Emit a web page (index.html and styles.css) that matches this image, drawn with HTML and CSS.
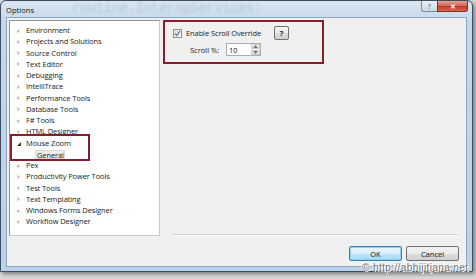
FILE: index.html
```html
<!DOCTYPE html>
<html>
<head>
<meta charset="utf-8">
<link rel="stylesheet" href="styles.css">
</head>
<body>
<div class="window">
  <div class="titlebar">
    <span class="glass-text">routine.InteropServices:</span>
    <span class="title">Options</span>
    <div class="caption">
      <div class="cap-help">?</div>
      <div class="cap-close">✕</div>
    </div>
  </div>
  <div class="client">
    <div class="main">
      <div class="tree">
        <ul class="tree-list">
          <li><span class="arr"></span>Environment</li>
          <li><span class="arr"></span>Projects and Solutions</li>
          <li><span class="arr"></span>Source Control</li>
          <li><span class="arr"></span>Text Editor</li>
          <li><span class="arr"></span>Debugging</li>
          <li><span class="arr"></span>IntelliTrace</li>
          <li><span class="arr"></span>Performance Tools</li>
          <li><span class="arr"></span>Database Tools</li>
          <li><span class="arr"></span>F# Tools</li>
          <li><span class="arr"></span>HTML Designer</li>
          <li><span class="arr open"></span>Mouse Zoom</li>
          <li class="child"><span class="sel">General</span></li>
          <li><span class="arr"></span>Pex</li>
          <li><span class="arr"></span>Productivity Power Tools</li>
          <li><span class="arr"></span>Test Tools</li>
          <li><span class="arr"></span>Text Templating</li>
          <li><span class="arr"></span>Windows Forms Designer</li>
          <li><span class="arr"></span>Workflow Designer</li>
        </ul>
        <div class="annot-tree"></div>
      </div>
      <div class="pane">
        <div class="settings">
          <div class="row1">
            <span class="check"><svg width="7" height="7" viewBox="0 0 7 7"><path d="M1 3.6 L2.8 5.6 L6 1" fill="none" stroke="#5a6d92" stroke-width="1.2"/></svg></span>
            <span class="label-enable">Enable Scroll Override</span>
            <span class="qbtn">?</span>
          </div>
          <div class="row2">
            <span class="label-scroll">Scroll %:</span>
            <span class="spin">
              <span class="spin-val">10</span>
              <span class="spin-btns">
                <span class="sb"><svg width="5" height="3" viewBox="0 0 5 3"><path d="M0 3 L2.5 0 L5 3Z" fill="#6d7a8c"/></svg></span>
                <span class="sb"><svg width="5" height="3" viewBox="0 0 5 3"><path d="M0 0 L2.5 3 L5 0Z" fill="#6d7a8c"/></svg></span>
              </span>
            </span>
          </div>
        </div>
        <div class="sep"></div>
      </div>
    </div>
    <div class="footer">
      <span class="btn btn-ok">OK</span>
      <span class="btn">Cancel</span>
    </div>
  </div>
</div>
<div class="watermark">© http://abhijitjana.net</div>
</body>
</html>
```
FILE: styles.css
```css
html, body {
  margin: 0;
  padding: 0;
}
body {
  width: 476px;
  height: 279px;
  background: #d9d9d9;
  position: relative;
  overflow: hidden;
  font-family: "Open Sans", "Noto Sans", sans-serif;
}
.window {
  box-sizing: border-box;
  width: 473px;
  height: 272px;
  border: 1px solid #3f4d5e;
  border-radius: 6px 6px 0 0;
  background: linear-gradient(to bottom, #dbe6f1 0px, #c4d8ec 20px, #b9d1ea 100%);
  padding: 0 5px 4px 5px;
  display: flex;
  flex-direction: column;
  box-shadow: 2px 2px 4px rgba(0,0,0,0.45);
}
.titlebar {
  height: 16px;
  position: relative;
  display: flex;
  align-items: center;
  flex-shrink: 0;
}
.glass-text {
  position: absolute;
  left: 66px;
  top: -1px;
  font-family: "Liberation Mono", monospace;
  font-size: 14px;
  letter-spacing: -0.5px;
  color: rgba(95, 115, 140, 0.24);
  filter: blur(1px);
  white-space: nowrap;
}
.title {
  position: relative;
  font-size: 7.6px;
  color: #111;
  margin-top: 2px;
}
.caption {
  margin-left: auto;
  margin-right: -1px;
  align-self: flex-start;
  display: flex;
  position: relative;
}
.cap-help, .cap-close {
  height: 11px;
  box-sizing: border-box;
  display: flex;
  align-items: center;
  justify-content: center;
  font-size: 7px;
  font-weight: bold;
}
.cap-help {
  width: 16px;
  border: 1px solid #7e8a99;
  border-top: none;
  border-right: none;
  border-radius: 0 0 0 3px;
  background: linear-gradient(to bottom, #e9eef4, #cfd8e2);
  color: #8b97a6;
}
.cap-close {
  width: 31px;
  border: 1px solid #7b3028;
  border-top: none;
  border-radius: 0 0 3px 0;
  background: linear-gradient(to bottom, #e6a394 0%, #d56a58 45%, #c43b2a 55%, #d6664d 100%);
  color: #fff;
  font-size: 7px;
}
.client {
  box-sizing: border-box;
  flex: 1;
  border: 1px solid #8fa5bd;
  background: #f0f0f0;
  display: flex;
  flex-direction: column;
}
.main {
  display: flex;
  padding: 2px 0 0 2px;
}
.tree {
  position: relative;
  box-sizing: border-box;
  width: 151px;
  height: 216px;
  background: #fff;
  border: 1px solid #8e939b;
  border-right-color: #c6c9ce;
  border-bottom-color: #c6c9ce;
}
.tree-list {
  list-style: none;
  margin: 0;
  padding: 4px 0 0 0;
}
.tree-list li {
  height: 11.25px;
  line-height: 11.25px;
  font-size: 7.5px;
  letter-spacing: -0.1px;
  color: #1a1a1a;
  display: flex;
  align-items: center;
  padding-left: 6px;
  white-space: nowrap;
}
.arr {
  width: 0;
  height: 0;
  border-top: 2.5px solid transparent;
  border-bottom: 2.5px solid transparent;
  border-left: 3.5px solid #b4b4b4;
  margin-right: 6px;
  margin-left: 1px;
  position: relative;
}
.arr::after {
  content: "";
  position: absolute;
  left: -3px;
  top: -1.3px;
  border-top: 1.3px solid transparent;
  border-bottom: 1.3px solid transparent;
  border-left: 1.8px solid #fff;
}
.arr.open {
  border: none;
  width: 0;
  height: 0;
  border-left: 4px solid transparent;
  border-bottom: 4px solid #3a3a3a;
  margin-left: 1px;
  margin-right: 5px;
  margin-top: 2px;
}
.arr.open::after {
  display: none;
}
.tree-list li.child {
  padding-left: 25px;
}
.sel {
  display: inline-block;
  height: 9px;
  line-height: 8px;
  padding: 0 1px;
  background: #ececec;
  border: 1px solid #dadada;
  box-sizing: border-box;
  width: 30px;
}
.annot-tree {
  position: absolute;
  left: 0px;
  top: 113px;
  width: 80px;
  height: 27px;
  box-sizing: border-box;
  border: 2px solid #8a1c2b;
}
.pane {
  flex: 1;
  margin-left: 3px;
  height: 216px;
  display: flex;
  flex-direction: column;
  justify-content: space-between;
}
.settings {
  box-sizing: border-box;
  width: 161px;
  height: 44px;
  border: 2px solid #8a1c2b;
  padding-top: 3px;
}
.row1 {
  display: flex;
  align-items: center;
  height: 16px;
  padding-left: 8px;
}
.check {
  box-sizing: border-box;
  width: 9px;
  height: 9px;
  border: 1px solid #8e8f8f;
  background: linear-gradient(135deg, #dcdcdc, #f7f7f7);
  display: flex;
  align-items: center;
  justify-content: center;
  margin-right: 4px;
}
.label-enable {
  width: 88px;
  font-size: 7.5px;
  letter-spacing: -0.1px;
  color: #1a1a1a;
  white-space: nowrap;
}
.qbtn {
  box-sizing: border-box;
  width: 15px;
  height: 14px;
  border: 1px solid #707070;
  border-radius: 2px;
  background: linear-gradient(to bottom, #f4f4f4 0%, #e9e9e9 50%, #dcdcdc 51%, #cfcfcf 100%);
  font-size: 7.5px;
  font-weight: bold;
  display: flex;
  align-items: center;
  justify-content: center;
  color: #111;
}
.row2 {
  display: flex;
  align-items: center;
  height: 13px;
  margin-top: 2px;
  padding-left: 25px;
}
.label-scroll {
  width: 36px;
  font-size: 7.5px;
  color: #1a1a1a;
}
.spin {
  box-sizing: border-box;
  width: 35px;
  height: 13px;
  border: 1px solid #abadb3;
  background: #fff;
  display: flex;
  align-items: center;
}
.spin-val {
  flex: 1;
  font-size: 7.5px;
  padding-left: 2px;
  color: #111;
}
.spin-btns {
  width: 9px;
  height: 11px;
  display: flex;
  flex-direction: column;
  gap: 1px;
}
.sb {
  flex: 1;
  background: linear-gradient(to bottom, #f2f2f2, #dedede);
  border: 1px solid #c9ccd1;
  box-sizing: border-box;
  display: flex;
  align-items: center;
  justify-content: center;
}
.sep {
  height: 2px;
  margin: 0 8px 0 9px;
  border-top: 1px solid #d0d0d0;
  border-bottom: 1px solid #fafafa;
  box-sizing: border-box;
}
.footer {
  display: flex;
  justify-content: flex-end;
  gap: 4px;
  padding: 10px 7px 0 0;
}
.btn {
  box-sizing: border-box;
  width: 53px;
  height: 15px;
  border: 1px solid #707070;
  border-radius: 2px;
  background: linear-gradient(to bottom, #f2f2f2 0%, #ebebeb 50%, #dddddd 51%, #cfcfcf 100%);
  font-size: 7.5px;
  color: #111;
  display: flex;
  align-items: center;
  justify-content: center;
}
.btn-ok {
  border-color: #3c7fb1;
  background: linear-gradient(to bottom, #eaf6fd 0%, #d9f0fc 50%, #bee6fd 51%, #a7d9f5 100%);
  box-shadow: inset 0 0 0 1px #8cd0f3;
}
.watermark {
  position: absolute;
  left: 362px;
  top: 262px;
  font-family: "Liberation Sans", sans-serif;
  font-size: 10px;
  letter-spacing: 0.4px;
  color: #6f6f6f;
  white-space: nowrap;
  text-shadow: 0 0 1px #fff, 0 0 1px #fff, 1px 1px 0 #fff, -1px -1px 0 #fff;
}
```
